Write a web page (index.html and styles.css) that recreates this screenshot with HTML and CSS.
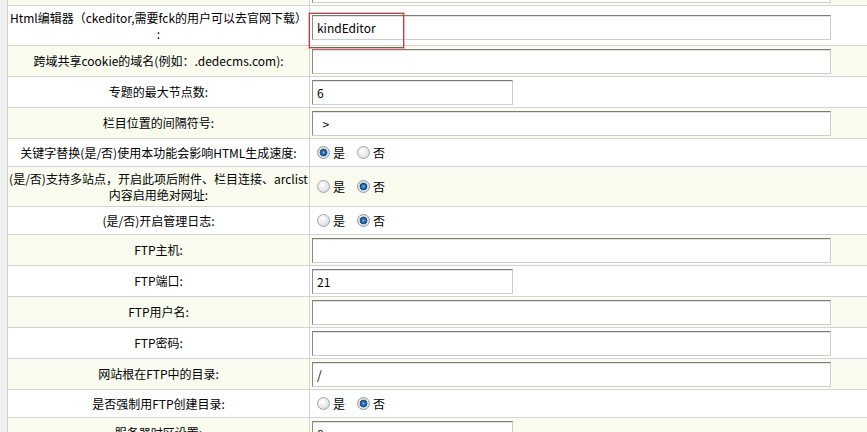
FILE: index.html
```html
<!DOCTYPE html>
<html lang="zh-CN">
<head>
  <meta charset="UTF-8">
  <title>系统基本参数</title>
  <link rel="stylesheet" href="styles.css">
</head>
<body>

  <div class="main">
    <div class="conf">

      <!-- row scrolled above the top edge -->
      <div class="row">
        <div class="label"></div>
        <div class="value"><input type="text" class="txt long" value=""></div>
      </div>

      <div class="row two">
        <div class="label">Html编辑器（ckeditor,需要fck的用户可以去官网下载）<br>:</div>
        <div class="value">
          <input type="text" class="txt long editor" value="kindEditor">
          <span class="mark"></span>
        </div>
      </div>

      <div class="row">
        <div class="label">跨域共享cookie的域名(例如：.dedecms.com):</div>
        <div class="value"><input type="text" class="txt long" value=""></div>
      </div>

      <div class="row">
        <div class="label">专题的最大节点数:</div>
        <div class="value"><input type="text" class="txt short" value="6"></div>
      </div>

      <div class="row">
        <div class="label">栏目位置的间隔符号:</div>
        <div class="value"><input type="text" class="txt long" value="&nbsp;&nbsp;> "></div>
      </div>

      <div class="row radio">
        <div class="label">关键字替换(是/否)使用本功能会影响HTML生成速度:</div>
        <div class="value">
          <label class="opt"><input type="radio" name="keyword" checked>是</label>
          <label class="opt"><input type="radio" name="keyword">否</label>
        </div>
      </div>

      <div class="row two">
        <div class="label">(是/否)支持多站点，开启此项后附件、栏目连接、arclist内容启用绝对网址:</div>
        <div class="value">
          <label class="opt"><input type="radio" name="multisite">是</label>
          <label class="opt"><input type="radio" name="multisite" checked>否</label>
        </div>
      </div>

      <div class="row radio">
        <div class="label">(是/否)开启管理日志:</div>
        <div class="value">
          <label class="opt"><input type="radio" name="adminlog">是</label>
          <label class="opt"><input type="radio" name="adminlog" checked>否</label>
        </div>
      </div>

      <div class="row">
        <div class="label">FTP主机:</div>
        <div class="value"><input type="text" class="txt long" value=""></div>
      </div>

      <div class="row">
        <div class="label">FTP端口:</div>
        <div class="value"><input type="text" class="txt short" value="21"></div>
      </div>

      <div class="row">
        <div class="label">FTP用户名:</div>
        <div class="value"><input type="text" class="txt long" value=""></div>
      </div>

      <div class="row">
        <div class="label">FTP密码:</div>
        <div class="value"><input type="text" class="txt long" value=""></div>
      </div>

      <div class="row">
        <div class="label">网站根在FTP中的目录:</div>
        <div class="value"><input type="text" class="txt long" value="/"></div>
      </div>

      <div class="row radio">
        <div class="label">是否强制用FTP创建目录:</div>
        <div class="value">
          <label class="opt"><input type="radio" name="ftpmkdir">是</label>
          <label class="opt"><input type="radio" name="ftpmkdir" checked>否</label>
        </div>
      </div>

      <div class="row">
        <div class="label">服务器时区设置:</div>
        <div class="value"><input type="text" class="txt short" value="8"></div>
      </div>

    </div>
  </div>

</body>
</html>
```

FILE: styles.css
```css
body {
  margin: 0;
  padding: 0;
  background-color: #f1f1f1;
  font-family: "Noto Sans CJK SC", sans-serif;
  font-size: 12px;
  line-height: 16px;
  color: #000;
}

.main {
  margin-left: 7px;
  height: 432px;
  overflow: hidden;
  background-color: #fff;
  border-left: 1px solid #d0d0d0;
}

.conf {
  margin-top: -25px;
}

.row {
  display: flex;
  height: 30px;
  border-bottom: 1px solid #d3d3d3;
  background-color: #fff;
}

.row:nth-child(odd) {
  background-color: #f9fcef;
}

.row.two {
  height: 39px;
}

.row.radio {
  height: 27px;
}

.label {
  width: 302px;
  flex-shrink: 0;
  box-sizing: border-box;
  padding: 0 1px;
  display: flex;
  align-items: center;
  justify-content: center;
  text-align: center;
  word-break: break-all;
  border-right: 1px solid #d3d3d3;
}

.value {
  position: relative;
  flex: 1;
  display: flex;
  align-items: center;
  padding-left: 2px;
}

.txt {
  box-sizing: border-box;
  height: 25px;
  margin: 0;
  padding: 0 4px;
  font-family: "Noto Sans CJK SC", sans-serif;
  font-size: 12px;
  color: #000;
  background-color: #fff;
  border: 1px solid;
  border-color: #7a7a7a #cdcdcd #cdcdcd #8a8a8a;
  box-shadow: inset 0 1px 0 #e4e4e4;
  outline: none;
}

.txt.long {
  width: 519px;
}

.txt.short {
  width: 201px;
}

.txt.editor {
  margin-top: 4px;
}

.opt {
  display: inline-flex;
  align-items: center;
  margin-right: 7px;
}

.opt input {
  -webkit-appearance: none;
  appearance: none;
  box-sizing: border-box;
  width: 13px;
  height: 13px;
  margin: 0 3px 0 5px;
  border: 1px solid #a5a5a5;
  border-radius: 50%;
  background: radial-gradient(circle at 40% 35%, #ffffff 0, #ececec 45%, #cfcfcf 100%);
}

.opt input:checked {
  border-color: #8e9aa6;
  background: radial-gradient(circle at 50% 50%, #7cc4f0 0, #2a78c0 1.5px, #15508e 3px, #3a5f85 3.6px, #e6e6e6 4.2px, #d2d2d2 100%);
}

/* red annotation frame drawn over the editor field */
.mark {
  position: absolute;
  left: -1px;
  top: 7px;
  width: 93px;
  height: 33px;
  border: 1px solid #cc3a40;
  box-shadow: 0 0 0 1px rgba(220, 90, 95, 0.45);
  pointer-events: none;
}
```
